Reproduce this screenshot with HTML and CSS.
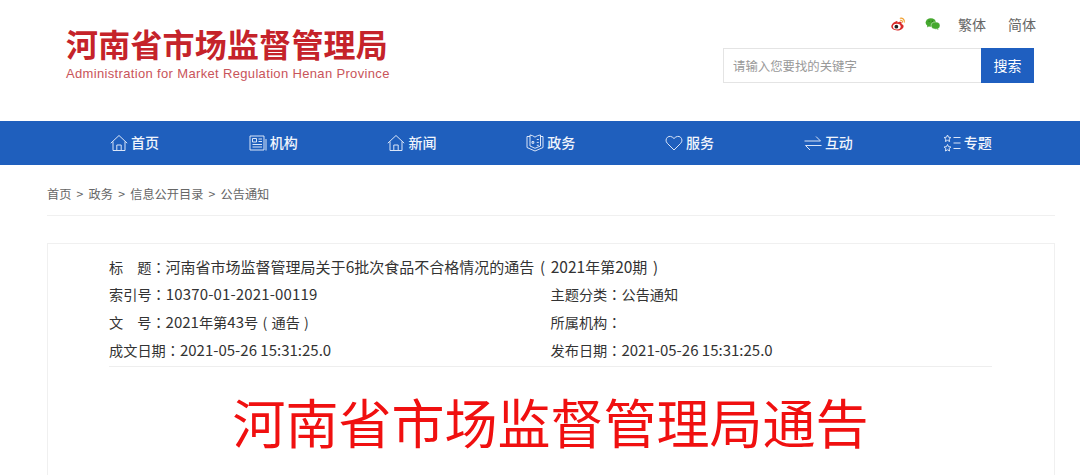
FILE: index.html
```html
<!DOCTYPE html>
<html lang="zh-CN">
<head>
<meta charset="utf-8">
<title>河南省市场监督管理局</title>
<link rel="stylesheet" href="styles.css">
</head>
<body>
<header class="site-header">
  <div class="logo">
    <div class="logo-cn">河南省市场监督管理局</div>
    <div class="logo-en">Administration for Market Regulation Henan Province</div>
  </div>
  <div class="tools">
    <div class="links">
      <svg class="weibo" width="17" height="16" viewBox="0 0 20 18"><path d="M8 5.500C4.500 6.500 1.500 9.500 1.500 12c0 2.600 3.300 4.500 7 4.500 4.200 0 7.500-2.300 7.500-5 0-1.700-1.600-2.400-2.500-2.600.5-1.300.2-2.300-.8-2.600-1.200-.3-3 .4-3.800 1 .2-1.300-.2-2.300-1.400-1.800z" fill="#d92b2b"/><ellipse cx="8" cy="12" rx="4.600" ry="3.400" fill="#fff"/><circle cx="7.500" cy="12.200" r="2.200" fill="#222"/><path d="M12 2.200c2.800-.6 5.300 1.600 4.800 4.600M12.300 4.600c1.400-.3 2.600.9 2.300 2.300" fill="none" stroke="#f0a030" stroke-width="1.300" stroke-linecap="round"/></svg>
      <svg class="wechat" width="16" height="14" viewBox="0 0 20 18"><ellipse cx="7.200" cy="7" rx="6.700" ry="5.500" fill="#45a82e"/><path d="M3 10.500l-.8 3 3-1.800z" fill="#45a82e"/><ellipse cx="13.300" cy="11" rx="5.700" ry="4.600" fill="#45a82e" stroke="#fff" stroke-width=".6"/><path d="M16 14.500l1.200 2-3-1.200z" fill="#45a82e"/><circle cx="5" cy="5.500" r=".9" fill="#2d7d1c"/><circle cx="9.300" cy="5.500" r=".9" fill="#2d7d1c"/></svg>
      <a class="lang">繁体</a>
      <a class="lang">简体</a>
    </div>
    <div class="search">
      <div class="search-input">请输入您要找的关键字</div>
      <div class="search-btn">搜索</div>
    </div>
  </div>
</header>

<nav class="nav">
  <a class="nav-item">
    <svg class="ico" viewBox="0 0 18 18"><path d="M.8 9.200 9 1.500l8.200 7.700M3 7.500V16.500h12V7.500M6.800 16.500v-5.500h4.400v5.500"/></svg><span>首页</span></a>
  <a class="nav-item">
    <svg class="ico" viewBox="0 0 18 18"><path d="M1 2h14v14H1zM17 5v11.500M3.500 4.500h4v3.500h-4zM9.500 5h3.500M9.500 7.500h3.500M3.500 10.500h9.500M3.500 13h9.500"/></svg><span>机构</span></a>
  <a class="nav-item">
    <svg class="ico" viewBox="0 0 18 18"><path d="M.8 9.200 9 1.500l8.200 7.700M3 7.500V16.500h12V7.500M6.800 16.500v-5.500h4.400v5.500"/></svg><span>新闻</span></a>
  <a class="nav-item">
    <svg class="ico" viewBox="0 0 18 18"><path d="M4 2.500H1v11l8 3.500 8-3.500v-11h-2.500M4 1c2 .3 3.700 1 5 2.200C10.300 2 12.500 1.300 14.500 1v11l-5.500 2.300L4 12zM6 7.500h1.800v1.800H6zM10.800 5.500h2M10.800 8.400h2M10.800 11.300h2"/></svg><span>政务</span></a>
  <a class="nav-item">
    <svg class="ico" viewBox="0 0 18 18"><path d="M9 16 2.300 9.300C.5 7.500.7 4.700 2.500 3.200c1.800-1.400 4.200-1.100 6.500 1.300 2.300-2.400 4.700-2.700 6.500-1.300 1.800 1.500 2 4.300.2 6.100z"/></svg><span>服务</span></a>
  <a class="nav-item">
    <svg class="ico" viewBox="0 0 18 18"><path d="M.5 7h16l-4.500-4.500M17.500 11.500H1.500L6 16"/></svg><span>互动</span></a>
  <a class="nav-item">
    <svg class="ico" viewBox="0 0 18 18"><path d="M4.500 1 5.500 3.200l2.400.3-1.800 1.600.5 2.400-2.100-1.200-2.100 1.200.5-2.400L1.100 3.500l2.400-.3zM4.500 10.500l1 2.200 2.400.3-1.800 1.600.5 2.400-2.100-1.200-2.100 1.200.5-2.400-1.800-1.600 2.400-.3zM10.500 3.500h7M10.500 9h7M10.500 14.500h7"/></svg><span>专题</span></a>
</nav>

<main class="content">
  <div class="crumbs">首页 &gt; 政务 &gt; 信息公开目录 &gt; 公告通知</div>
  <section class="card">
    <div class="meta">
      <div class="meta-title">标<span class="sp"></span>题<span class="p" lang="zh-Hant">：</span><span class="title-text">河南省市场监督管理局关于<span class="num">6</span>批次食品不合格情况的通告<span class="paren">(</span><span class="num">2021</span>年第<span class="num">20</span>期<span class="paren">)</span></span></div>
      <div>索引号<span class="p" lang="zh-Hant">：</span><span class="num wide">10370-01-2021-00119</span></div>
      <div>主题分类<span class="p" lang="zh-Hant">：</span>公告通知</div>
      <div>文<span class="sp"></span>号<span class="p" lang="zh-Hant">：</span><span class="num">2021</span>年第<span class="num">43</span>号<span class="paren">(</span>通告<span class="paren">)</span></div>
      <div>所属机构<span class="p" lang="zh-Hant">：</span></div>
      <div>成文日期<span class="p" lang="zh-Hant">：</span><span class="num">2021-05-26 15:31:25.0</span></div>
      <div>发布日期<span class="p" lang="zh-Hant">：</span><span class="num">2021-05-26 15:31:25.0</span></div>
    </div>
    <h1 class="headline">河南省市场监督管理局通告</h1>
  </section>
</main>
</body>
</html>
```
FILE: styles.css
```css
* { box-sizing: border-box; }
html, body { margin: 0; padding: 0; height: 475px; overflow: hidden; background: #fff; }
body { font-family: "Noto Sans CJK SC", "Noto Sans", sans-serif; color: #333; text-spacing-trim: space-all; }

.site-header { height: 121px; display: flex; justify-content: space-between; padding: 0 46px 0 66px; }
.logo { padding-top: 24px; }
.logo-cn { font-size: 32px; line-height: 38px; font-weight: 700; color: #c5232a; letter-spacing: .2px; }
.logo-en { font-family: "Liberation Sans", sans-serif; font-size: 13px; line-height: 16px; margin-top: 4px; color: #c9545a; letter-spacing: .34px; }

.tools { width: 311px; padding-top: 13px; }
.links { display: flex; align-items: center; justify-content: flex-end; height: 22px; color: #666; font-size: 14px; margin-right: -2px; }
.weibo { margin-right: 18px; }
.wechat { margin-right: 17px; }
.lang { width: 28px; }
.lang:last-child { margin-left: 22px; }
.search { display: flex; height: 35px; margin-top: 13px; }
.search-input { flex: 1; border: 1px solid #e4e4e4; border-right: 0; font-size: 12.400px; line-height: 35px; color: #999; padding-left: 9px; }
.search-btn { width: 53px; background: #1f5fc0; color: #fff; font-size: 14px; line-height: 35px; text-align: center; }

.nav { height: 44px; background: #1f5fbd; display: grid; grid-template-columns: repeat(7, 138.800px); padding-left: 65px; }
.nav-item { display: flex; align-items: center; justify-content: center; gap: 3px; color: #f1f5fc; font-size: 14px; font-weight: 500; line-height: 20px; padding-bottom: 1px; }
.nav-item span { margin-bottom: 1px; }
.ico { width: 18px; height: 18px; fill: none; stroke: #dbe6f8; stroke-width: 1; }

.content { padding: 0 25px 0 47px; }
.crumbs { height: 51px; border-bottom: 1px solid #f0f0f0; font-size: 12.200px; word-spacing: 2.500px; line-height: 58px; color: #666; }
.card { margin-top: 27px; height: 232px; border: 1px solid #f0f0f0; border-bottom: 0; padding: 8px 62px 0 61px; }
.meta { display: grid; grid-template-columns: 441.500px 1fr; grid-auto-rows: 28px; font-size: 14.200px; line-height: 28px; color: #333; border-bottom: 1px solid #eee; padding-bottom: 2px; }
.meta-title { grid-column: 1 / -1; }
.sp { display: inline-block; width: 14px; }
.p { font-family: "Noto Sans CJK TC", sans-serif; }
.title-text { font-size: 15px; }
.num { font-size: 15px; }
.title-text .num { font-size: 15.500px; }
.wide { letter-spacing: .15px; }
.paren { padding: 0 .3em; }
.title-text .paren { padding: 0 .38em; }
.headline { margin: 21px 0 0; font-size: 53px; line-height: 66px; font-weight: 400; color: #f01010; text-align: center; }
```
